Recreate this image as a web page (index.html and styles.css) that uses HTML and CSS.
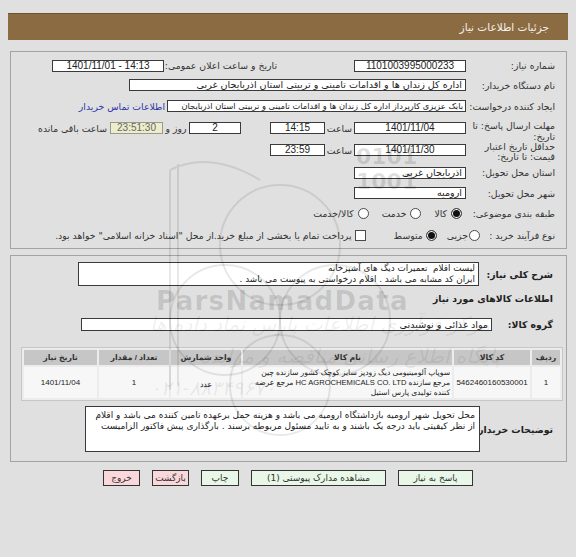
FILE: index.html
```html
<!DOCTYPE html>
<html lang="fa" dir="rtl">
<head>
<meta charset="utf-8">
<title>جزئیات اطلاعات نیاز</title>
<link rel="stylesheet" href="styles.css">
</head>
<body>
<div class="titlebar">جزئیات اطلاعات نیاز</div>

<div class="panel p1">
  <div class="row r1">
    <div class="lbl">شماره نیاز:</div>
    <div class="box num w112 c">1101003995000233</div>
    <div class="lbl-date">تاریخ و ساعت اعلان عمومی:</div>
    <div class="box num w112 c" dir="ltr">1401/11/01 - 14:13</div>
  </div>
  <div class="row r2">
    <div class="lbl">نام دستگاه خریدار:</div>
    <div class="box w337">اداره کل زندان ها و اقدامات تامینی و تربیتی استان اذربایجان غربی</div>
  </div>
  <div class="row r3">
    <div class="lbl">ایجاد کننده درخواست:</div>
    <div class="box w299 fit">بابک عزیزی کارپرداز اداره کل زندان ها و اقدامات تامینی و تربیتی استان اذربایجان</div>
    <a class="link" href="#">اطلاعات تماس خریدار</a>
  </div>
  <div class="row r4">
    <div class="lbl two">مهلت ارسال پاسخ: تا<br>تاریخ:</div>
    <div class="inner i4">
      <div class="box num w112 c">1401/11/04</div>
      <div class="sa">ساعت</div>
      <div class="box num w55 c">14:15</div>
      <div class="box num w52 c days">2</div>
      <div class="rz">روز و</div>
      <div class="remain num c">23:51:30</div>
      <div class="rem-lbl">ساعت باقی مانده</div>
    </div>
  </div>
  <div class="row r5">
    <div class="lbl two t5">حداقل تاریخ اعتبار<br>قیمت: تا تاریخ:</div>
    <div class="inner i5">
      <div class="box num w112 c">1401/11/30</div>
      <div class="sa">ساعت</div>
      <div class="box num w55 c">23:59</div>
    </div>
  </div>
  <div class="row r6">
    <div class="lbl">استان محل تحویل:</div>
    <div class="box w112">آذربایجان غربی</div>
  </div>
  <div class="row r7">
    <div class="lbl">شهر محل تحویل:</div>
    <div class="box w112">ارومیه</div>
  </div>
  <div class="row r8">
    <div class="lbl">طبقه بندی موضوعی:</div>
    <span class="radio on first"></span><span class="opt">کالا</span>
    <span class="radio"></span><span class="opt">خدمت</span>
    <span class="radio"></span><span class="opt">کالا/خدمت</span>
  </div>
  <div class="row r9">
    <div class="lbl l9">نوع فرآیند خرید :</div>
    <span class="radio"></span><span class="opt o1">جزیی</span>
    <span class="radio on"></span><span class="opt o2">متوسط</span>
    <span class="check"></span><span class="opt">پرداخت تمام یا بخشی از مبلغ خرید.از محل "اسناد خزانه اسلامی" خواهد بود.</span>
  </div>
</div>

<div class="panel p2">
  <div class="row sharh">
    <div class="lbl b lw74">شرح کلی نیاز:</div>
    <div class="box ta">لیست اقلام&nbsp; تعمیرات دیگ های آشپزخانه<br>ایران کد مشابه می باشد . اقلام درخواستی به پیوست می باشد .</div>
  </div>
  <div class="heading b">اطلاعات کالاهای مورد نیاز</div>
  <div class="row grp">
    <div class="lbl b lw61">گروه کالا:</div>
    <div class="box w411">مواد غذائی و نوشیدنی</div>
  </div>
  <table class="items">
    <thead>
      <tr>
        <th class="cw1">ردیف</th>
        <th class="cw2">کد کالا</th>
        <th class="cw3">نام کالا</th>
        <th class="cw4">واحد شمارش</th>
        <th class="cw5">تعداد / مقدار</th>
        <th class="cw6">تاریخ نیاز</th>
      </tr>
    </thead>
    <tbody>
      <tr>
        <td>1</td>
        <td>5462460160530001</td>
        <td class="name">سوپاپ آلومینیومی دیگ زودپز سایز کوچک کشور سازنده چین<br>مرجع سازنده HC AGROCHEMICALS CO. LTD مرجع عرضه<br>کننده تولیدی پارس استیل</td>
        <td class="unit">عدد</td>
        <td>1</td>
        <td>1401/11/04</td>
      </tr>
    </tbody>
  </table>
  <div class="row notes">
    <div class="lbl b lw73">توضیحات خریدار:</div>
    <div class="box ta2">محل تحویل شهر ارومیه بازداشتگاه ارومیه می باشد و هزینه حمل برعهده تامین کننده می باشد و اقلام از نظر کیفیتی باید درجه یک باشند و به تایید مسئول مربوطه برسند . بارگذاری پیش فاکتور الزامیست</div>
  </div>
</div>

<div class="buttons">
  <button class="btn g bw75">پاسخ به نیاز</button>
  <button class="btn g bw135">مشاهده مدارک پیوستی (1)</button>
  <button class="btn g bw38">چاپ</button>
  <button class="btn p bw37">بازگشت</button>
  <button class="btn p bw37">خروج</button>
</div>

<div class="watermark" aria-hidden="true">
  <div class="wm-num n1">0101</div>
  <div class="wm-num n2">1001</div>
  <div class="wm-brand">ParsNamadData</div>
  <div class="wm-fa f1">مرکز فرآوری اطلاعات پارس نماد داده ها</div>
  <div class="wm-fa f2">پایگاه اطلاع رسانی مناقصه و مزایده</div>
  <div class="wm-fa f3">۰۲۱-۸۸۳۴۹۶۷۰</div>
  <svg class="wm-logo" width="260" height="300" viewBox="0 0 260 300">
    <g fill="none" stroke="rgba(0,0,0,0.09)" stroke-width="2">
      <circle cx="130" cy="95" r="60"/>
      <circle cx="75" cy="170" r="55"/>
      <circle cx="185" cy="170" r="55"/>
      <circle cx="130" cy="235" r="50"/>
      <path d="M20 20 L20 240 M28 14 L28 236 M20 20 Q60 0 110 30"/>
    </g>
  </svg>
</div>
</body>
</html>
```

FILE: styles.css
```css
* { box-sizing: border-box; }

body {
  margin: 8px;
  background: #e0e0e0;
  font-family: "DejaVu Sans", sans-serif;
  font-size: 9.3px;
  color: #333;
  direction: rtl;
  position: relative;
}

.titlebar {
  margin-top: 5px;
  height: 27px;
  background: #8b6b42;
  border-top: 1px solid #6c5232;
  color: #f5f1ea;
  font-size: 10.5px;
  padding-right: 19px;
  display: flex;
  align-items: center;
}

.panel {
  border: 1px solid #a3a3a3;
  margin: 0 1px 0 2px;
}

.p1 {
  margin-top: 11px;
  padding: 4px 11px 2px 0;
}

.row {
  display: flex;
  align-items: center;
}

.lbl {
  width: 89px;
  flex: none;
  white-space: nowrap;
}

.b { font-weight: bold; color: #222; }

.box {
  height: 12px;
  border: 1px solid #3a3a3a;
  background: #fff;
  line-height: 10px;
  padding: 0 3px;
  white-space: nowrap;
  overflow: hidden;
  color: #222;
  flex: none;
  font-size: 9.6px;
}
.box.num {
  font-family: "Liberation Sans", "DejaVu Sans", sans-serif;
  font-size: 10px;
}
.box.fit { font-size: 8.3px; padding: 0 2px; }

.c { text-align: center; }
.w112 { width: 112px; }
.w337 { width: 337px; }
.w299 { width: 299px; }
.w55 { width: 55px; }
.w52 { width: 52px; }
.w411 { width: 411px; }

.r1 { height: 19px; }
.r2 { height: 20px; }
.r3 { height: 22px; }
.r4 { height: 24px; align-items: flex-start; }
.r5 { height: 21px; align-items: flex-start; }
.r6 { height: 21px; }
.r7 { height: 20px; }
.r8 { height: 21px; }
.r9 { height: 22px; }

.lbl-date {
  width: 113px;
  margin-right: 77px;
  flex: none;
  white-space: nowrap;
}

.link {
  color: #2b35a8;
  text-decoration: none;
  margin-right: 2px;
  white-space: nowrap;
}

.two { line-height: 11px; padding-top: 3px; }
.t5 { line-height: 10px; padding-top: 1px; }

.inner {
  display: flex;
  align-items: center;
}
.i4 { margin-top: 5px; }
.i5 { margin-top: 3px; }

.sa { width: 29px; text-align: center; flex: none; }
.days { margin-right: 29px; }
.rz { width: 26px; text-align: center; flex: none; }

.remain {
  width: 53px;
  height: 12px;
  line-height: 10px;
  border: 1px solid #9a9a8a;
  background: #ededcb;
  color: #666;
  flex: none;
  font-family: "Liberation Sans", "DejaVu Sans", sans-serif;
  font-size: 10px;
}
.rem-lbl { margin-right: 3px; white-space: nowrap; }

.radio {
  width: 11px;
  height: 11px;
  border: 1px solid #4a4a4a;
  border-radius: 50%;
  background: #fff;
  flex: none;
}
.radio.on {
  background: #111;
  box-shadow: inset 0 0 0 1px #fff;
}
.radio.first { margin-right: 4px; }
.opt { margin: 0 4px 0 13px; white-space: nowrap; }

.l9 { width: 75px; }
.o1 { margin: 0 1px 0 10px; }
.o2 { margin: 0 3px 0 28px; }

.check {
  width: 11px;
  height: 11px;
  border: 1px solid #4a4a4a;
  background: #fff;
  flex: none;
}
.check + .opt { margin: 0 3px 0 0; }

.p2 {
  margin-top: 6px;
  padding: 6px 0 9px 0;
}
.p2 .row, .p2 .heading { padding-right: 13px; }

.lw74 { width: 74px; }
.lw61 { width: 61px; }
.lw73 { width: 73px; }

.sharh { height: 24px; }
.ta {
  width: 401px;
  height: 24px;
  line-height: 11px;
  padding: 0 3px;
  font-size: 8.8px;
}

.heading {
  height: 26px;
  line-height: 26px;
}

.grp { height: 25px; }
.grp .box { height: 13px; line-height: 11px; }

.items {
  margin: 10px 3px 0 auto;
  width: 542px;
  border: 1px solid #c6c6c6;
  border-spacing: 2px;
  background: #ececec;
  table-layout: fixed;
  font-family: "Liberation Sans", "DejaVu Sans", sans-serif;
  font-size: 7.8px;
}
.items th {
  height: 15px;
  padding: 0;
  background: #c6c6c6;
  font-weight: bold;
  color: #333;
}
.items td {
  height: 31px;
  padding: 0 2px;
  background: #f7f7f7;
  text-align: center;
  color: #222;
  line-height: 10px;
  font-size: 8px;
}
.items td.name {
  text-align: right;
  white-space: nowrap;
  font-size: 7.6px;
}
.items td.unit { font-family: "DejaVu Sans", sans-serif; font-size: 7.8px; padding-top: 4px; }
.cw1 { width: 28px; }
.cw2 { width: 76px; }
.cw3 { width: 209px; }
.cw4 { width: 70px; }
.cw5 { width: 70px; }
.cw6 { width: 73px; }

.notes { margin-top: 5px; }
.ta2 {
  width: 395px;
  height: 46px;
  white-space: normal;
  line-height: 11px;
  padding: 3px 4px 0 4px;
  font-size: 9px;
}

.buttons {
  display: flex;
  justify-content: center;
  gap: 12px;
  margin-top: 8px;
}
.btn {
  height: 16px;
  border: 1px solid #333;
  font-family: "DejaVu Sans", sans-serif;
  font-size: 9px;
  color: #333;
  padding: 0;
  line-height: 14px;
}
.btn.g { background: #e8f7e8; }
.btn.p { background: #fad7da; }
.bw75 { width: 75px; }
.bw135 { width: 135px; }
.bw38 { width: 38px; }
.bw37 { width: 37px; }

.watermark {
  position: absolute;
  left: -8px;
  top: -8px;
  width: 576px;
  height: 557px;
  pointer-events: none;
  direction: ltr;
}
.wm-num {
  position: absolute;
  font-family: "DejaVu Sans", sans-serif;
  font-weight: bold;
  font-size: 22px;
  color: rgba(0, 0, 0, 0.12);
  left: 356px;
}
.n1 { top: 144px; }
.n2 { top: 169px; }
.wm-brand {
  position: absolute;
  left: 156px;
  top: 286px;
  font-family: "DejaVu Sans", sans-serif;
  font-weight: bold;
  font-size: 26px;
  letter-spacing: 1.3px;
  color: rgba(0, 0, 0, 0.13);
}
.wm-fa {
  position: absolute;
  font-family: "DejaVu Sans", sans-serif;
  font-size: 20px;
  color: rgba(0, 0, 0, 0.08);
  direction: rtl;
  white-space: nowrap;
  font-style: italic;
}
.f1 { left: 150px; top: 312px; }
.f2 { left: 200px; top: 344px; }
.f3 { left: 150px; top: 376px; }
.wm-logo {
  position: absolute;
  left: 150px;
  top: 150px;
}
```
